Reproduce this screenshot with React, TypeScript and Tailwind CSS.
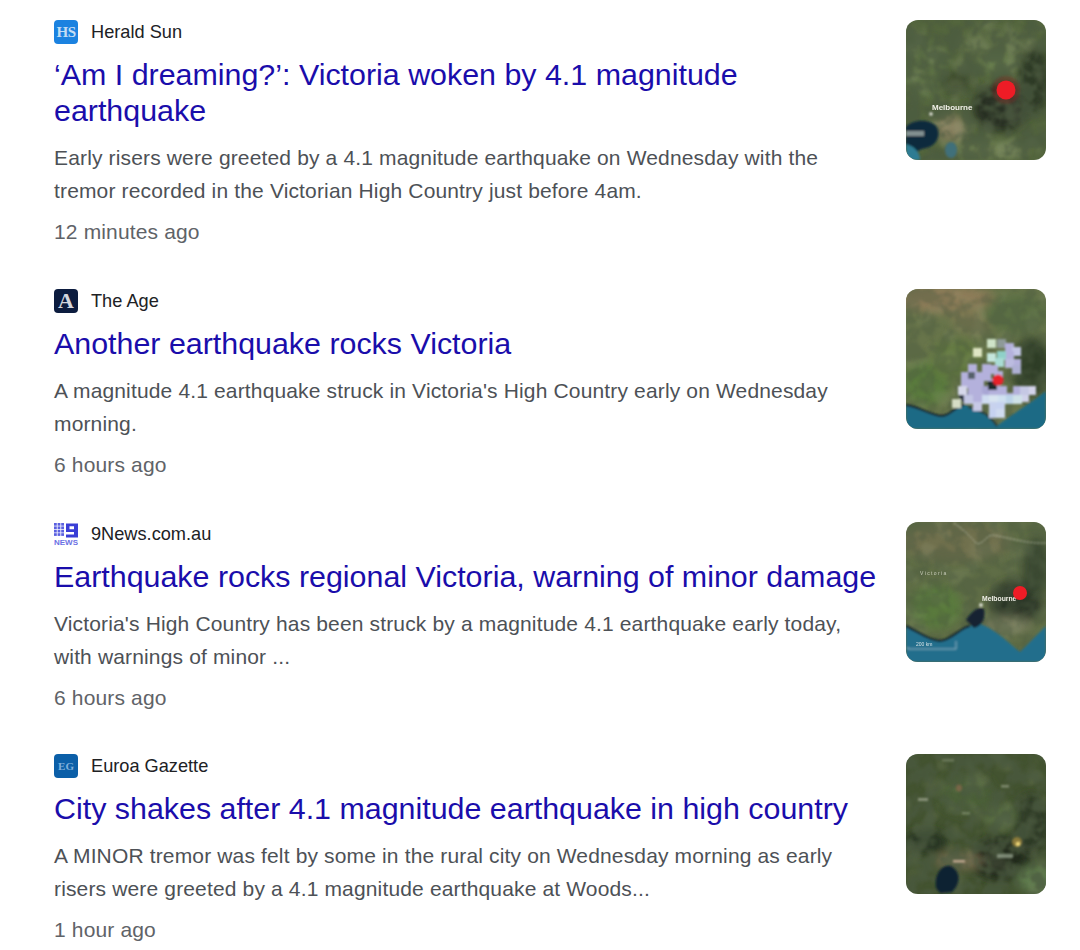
import React from "react";

const FONT = "font-['Liberation_Sans',Arial,sans-serif]";

function Terrain({ id, seed, opacity = 0.7, light = 0.15 }: { id: string; seed: number; opacity?: number; light?: number }) {
  return (
    <>
      <filter id={id} x="0" y="0" width="100%" height="100%">
        <feTurbulence type="fractalNoise" baseFrequency="0.07" numOctaves={3} seed={seed} />
        <feColorMatrix type="matrix" values="0 0 0 0 0.07  0 0 0 0 0.1  0 0 0 0 0.05  4.5 3 0 0 -3.2" />
        <feGaussianBlur stdDeviation="1" />
      </filter>
      <filter id={`${id}l`} x="0" y="0" width="100%" height="100%">
        <feTurbulence type="fractalNoise" baseFrequency="0.05" numOctaves={2} seed={seed + 20} />
        <feColorMatrix type="matrix" values="0 0 0 0 0.5  0 0 0 0 0.55  0 0 0 0 0.34  4.5 3 0 0 -3.7" />
        <feGaussianBlur stdDeviation="1.4" />
      </filter>
      <rect width="140" height="140" filter={`url(#${id}l)`} opacity={light} />
      <rect width="140" height="140" filter={`url(#${id})`} opacity={opacity} />
    </>
  );
}

function MapOne() {
  return (
    <svg viewBox="0 0 140 140" className="w-full h-full block">
      <defs>
        <filter id="b1"><feGaussianBlur stdDeviation="1" /></filter>
        <filter id="b1l"><feGaussianBlur stdDeviation="5" /></filter>
        <filter id="b1t"><feGaussianBlur stdDeviation="0.6" /></filter>
      </defs>
      <rect width="140" height="140" fill="#53653d" />
      <g filter="url(#b1l)">
        <ellipse cx="20" cy="50" rx="26" ry="30" fill="#5c7044" />
        <ellipse cx="90" cy="25" rx="40" ry="18" fill="#5f7047" />
        <ellipse cx="95" cy="88" rx="28" ry="24" fill="#252f20" />
        <ellipse cx="128" cy="60" rx="16" ry="34" fill="#2f3a26" />
        <ellipse cx="50" cy="62" rx="16" ry="12" fill="#3a4a2b" />
        <ellipse cx="90" cy="44" rx="16" ry="10" fill="#6a8050" />
        <ellipse cx="80" cy="130" rx="40" ry="10" fill="#6a7b50" />
        <ellipse cx="44" cy="108" rx="16" ry="14" fill="#87805e" />
      </g>
      <Terrain id="t1" seed={3} />
      <g filter="url(#b1)">
        <path d="M0 107 C6 100 22 98 30 106 C36 116 30 126 20 128 C14 129 10 132 6 135 L0 136 Z" fill="#0f2c3c" />
        <path d="M0 124 C8 126 14 132 14 140 L0 140 Z" fill="#2f7c93" />
        <ellipse cx="45" cy="130" rx="6" ry="8" fill="#41707a" />
        <rect x="0" y="111" width="18" height="5" fill="#a9b2ae" opacity=".75" />
        <circle cx="25" cy="94" r="1.7" fill="#f1f1e8" />
      </g>
      <text x="26" y="90" fontSize="8" fontWeight="700" fill="#f1f0e8" filter="url(#b1t)" className="font-['Liberation_Sans']">Melbourne</text>
      <circle cx="100" cy="70" r="14" fill="#7d1e1e" opacity=".35" filter="url(#b1)" />
      <circle cx="100" cy="70" r="9.5" fill="#ee1c25" filter="url(#b1t)" />
    </svg>
  );
}

const PIXELS: [number, number, string?][] = [
  [85,54,"#cfe3c8"],[71,63,"#dfe6c4"],[95,54,"#8e9a98"],[103,58],[110,62,"#c3c6e6"],[103,66],[95,66,"#8fd0c8"],[85,68,"#c5e6dc"],[93,73,"#a9dcd4"],[110,74],[103,74,"#bcbce0"],[110,80,"#aeb0d4"],
  [66,79],[59,87],[66,87,"#54606a"],[73,87],[80,79],[87,80],[92,86],[80,87],[87,94],[73,94],[66,94],[59,94],[56,101,"#d6d8ea"],[66,101],[73,101],[80,101,"#a8a6d4"],[73,108],[66,108],[87,101],[96,101],[104,108],[111,101],
  [118,108,"#d0d2ea"],[125,101,"#d4d4ea"],[118,101,"#c5c8e4"],[80,110,"#cfdcf0"],[87,110,"#d8e4f0"],[96,110,"#cfe0f0"],[104,110,"#bcd4e8"],[111,110,"#cfe2e8"],[87,117,"#c8d2ee"],[94,117,"#c6d2f0"],[87,124,"#c6d2f0"],[94,124,"#d0dcf0"],[71,117,"#c7c9e6"],[62,110,"#c3c6e4"],[50,114,"#d5dcc5"],
];

function MapTwo() {
  return (
    <svg viewBox="0 0 140 140" className="w-full h-full block">
      <defs>
        <filter id="b2"><feGaussianBlur stdDeviation="1.1" /></filter>
        <filter id="b2l"><feGaussianBlur stdDeviation="5" /></filter>
      </defs>
      <rect width="140" height="140" fill="#67744a" />
      <g filter="url(#b2l)">
        <ellipse cx="40" cy="10" rx="50" ry="14" fill="#8d7c58" />
        <ellipse cx="70" cy="30" rx="24" ry="14" fill="#7f7a52" />
        <ellipse cx="20" cy="95" rx="24" ry="22" fill="#5a7a3c" />
        <ellipse cx="125" cy="78" rx="20" ry="30" fill="#2e3c28" />
        <ellipse cx="110" cy="25" rx="34" ry="20" fill="#5c7044" />
        <ellipse cx="50" cy="70" rx="26" ry="20" fill="#62783f" />
      </g>
      <Terrain id="t2" seed={8} opacity={0.4} light={0.1} />
      <g filter="url(#b2)">
        <path d="M0 116 C14 118 26 127 36 127 C46 126 50 116 58 116 C72 118 84 126 91 137 C102 128 122 116 140 102 L140 140 L0 140 Z" fill="#1f6a85" />
        <path d="M0 116 C14 118 26 127 36 127 C46 126 50 116 58 116" fill="none" stroke="#12202a" strokeWidth="2" />
        <path d="M62 118 C72 120 84 126 91 137" fill="none" stroke="#2a3a34" strokeWidth="2" />
        <ellipse cx="60" cy="108" rx="7" ry="6" fill="#1a2b3a" />
        {PIXELS.map(([x, y, c], i) => (
          <rect key={i} x={x - 4} y={y - 4} width="9" height="9" fill={c ?? "#b4b1dc"} />
        ))}
        <rect x="82" y="92" width="9" height="9" fill="#1f2b2b" />
        <circle cx="92" cy="91" r="5.5" fill="#e8202a" />
      </g>
    </svg>
  );
}

function MapThree() {
  return (
    <svg viewBox="0 0 140 140" className="w-full h-full block">
      <defs>
        <filter id="b3"><feGaussianBlur stdDeviation="0.8" /></filter>
        <filter id="b3l"><feGaussianBlur stdDeviation="5" /></filter>
        <filter id="b3t"><feGaussianBlur stdDeviation="0.55" /></filter>
      </defs>
      <rect width="140" height="140" fill="#5f6d46" />
      <g filter="url(#b3l)">
        <ellipse cx="50" cy="20" rx="55" ry="20" fill="#6f704e" />
        <ellipse cx="30" cy="85" rx="26" ry="22" fill="#5a7a3e" />
        <ellipse cx="110" cy="80" rx="26" ry="22" fill="#2c3626" />
        <ellipse cx="130" cy="45" rx="14" ry="30" fill="#3a4a30" />
        <ellipse cx="100" cy="103" rx="26" ry="9" fill="#767a5c" />
      </g>
      <Terrain id="t3" seed={5} opacity={0.4} light={0.1} />
      <g filter="url(#b3)">
        <path d="M0 104 C12 110 24 119 34 119 C46 118 54 106 64 104 L74 102 C88 106 104 122 114 130 C122 122 132 112 140 104 L140 140 L0 140 Z" fill="#246e8c" />
        <path d="M60 98 C66 88 74 84 78 87 C80 96 76 104 68 106 Z" fill="#122433" />
        <path d="M0 104 C12 110 24 119 34 119 C46 118 54 106 64 104" fill="none" stroke="#12202a" strokeWidth="2" />
        <path d="M48 1 C58 8 64 14 70 21 C76 24 80 14 86 13 C104 16 122 22 140 21" fill="none" stroke="#c9cdb8" strokeWidth="1" strokeDasharray="2 1.5" />
        <circle cx="75" cy="83" r="1.8" fill="#f6f6ee" />
        <path d="M2 125 L2 127 L50 127 L50 119" fill="none" stroke="#b8d0d8" strokeWidth=".9" opacity=".8" />
      </g>
      <text x="14" y="53" fontSize="5" letterSpacing="1.4" fill="#c8cbb8" filter="url(#b3t)" className="font-['Liberation_Sans']">Victoria</text>
      <text x="76" y="79" fontSize="6.8" fontWeight="700" fill="#efefe6" filter="url(#b3t)" className="font-['Liberation_Sans']">Melbourne</text>
      <text x="10" y="124" fontSize="5" fill="#d6e2e6" filter="url(#b3t)" className="font-['Liberation_Sans']">200 km</text>
      <circle cx="114" cy="71" r="7" fill="#ee1c25" filter="url(#b3t)" />
    </svg>
  );
}

function MapFour() {
  return (
    <svg viewBox="0 0 140 140" className="w-full h-full block">
      <defs>
        <filter id="b4"><feGaussianBlur stdDeviation="1.2" /></filter>
        <filter id="b4l"><feGaussianBlur stdDeviation="5" /></filter>
      </defs>
      <rect width="140" height="140" fill="#435330" />
      <g filter="url(#b4l)">
        <ellipse cx="20" cy="88" rx="22" ry="12" fill="#283420" />
        <ellipse cx="95" cy="105" rx="30" ry="22" fill="#232c1e" />
        <ellipse cx="125" cy="70" rx="18" ry="30" fill="#2e3a25" />
        <ellipse cx="95" cy="62" rx="16" ry="12" fill="#5a7044" />
        <ellipse cx="60" cy="40" rx="28" ry="20" fill="#4c6038" />
        <ellipse cx="130" cy="125" rx="20" ry="14" fill="#5f7a4d" />
        <ellipse cx="52" cy="107" rx="24" ry="8" fill="#7d6f52" />
      </g>
      <Terrain id="t4" seed={11} />
      <g filter="url(#b4)">
        <path d="M30 134 C28 120 36 110 44 112 C54 116 56 128 46 138 L34 139 Z" fill="#0e2432" />
        <rect x="47" y="106" width="12" height="2.5" fill="#c2a890" />
        <rect x="91" y="100" width="16" height="4" fill="#a9b4a4" opacity=".6" />
        <rect x="12" y="44" width="10" height="3" fill="#c8ccb8" opacity=".5" />
        <rect x="56" y="58" width="8" height="2.5" fill="#aab49a" opacity=".45" />
        <rect x="95" y="31" width="8" height="2.5" fill="#b4bca4" opacity=".55" />
        <rect x="36" y="5" width="12" height="2.5" fill="#9aa488" opacity=".45" />
        <ellipse cx="53" cy="34" rx="3" ry="3.5" fill="#8a6a4c" opacity=".7" />
        <circle cx="111" cy="88" r="5" fill="#a08a40" opacity=".8" />
        <circle cx="112" cy="90" r="2.2" fill="#f0d878" />
      </g>
    </svg>
  );
}

function Herald() {
  return (
    <div className="w-6 h-6 rounded-[4px] bg-[#1b82e0] flex items-center justify-center overflow-hidden">
      <span className="font-['Liberation_Serif',serif] font-bold text-[15px] leading-none tracking-[-0.5px] text-[#c4ddf4]">HS</span>
    </div>
  );
}

function AgeIcon() {
  return (
    <div className="w-6 h-6 rounded-[4px] bg-[#0c1c3f] flex items-center justify-center overflow-hidden">
      <span className="font-['Liberation_Serif',serif] font-bold text-[22px] leading-none text-[#d4d6de]">A</span>
    </div>
  );
}

function NineIcon() {
  const dots = [];
  for (let r = 0; r < 4; r++) for (let c = 0; c < 3; c++) dots.push(<rect key={`${r}${c}`} x={c * 3.6} y={1 + r * 3.4} width="2.8" height="2.7" fill="#5a60e0" />);
  return (
    <svg viewBox="0 0 24 24" className="w-6 h-6 block">
      {dots}
      <path d="M12 1.5 H24 V15.5 H12 V12.4 H20 V10 H12 Z M15.5 4.2 V7.3 H20 V4.2 Z" fill="#3a3ed6" fillRule="evenodd" />
      <text x="0" y="23" fontSize="7.6" fontWeight="700" textLength="24" lengthAdjust="spacingAndGlyphs" fill="#6a70e4" className="font-['Liberation_Sans']">NEWS</text>
    </svg>
  );
}

function EuroaIcon() {
  return (
    <div className="w-6 h-6 rounded-[4px] bg-[#0b5fa8] flex items-center justify-center overflow-hidden">
      <span className="font-['Liberation_Serif',serif] font-bold text-[11px] leading-none text-[#7fb0dc]">EG</span>
    </div>
  );
}

function Item({ icon, source, title, snippet, time, map }: { icon: React.ReactNode; source: string; title: string; snippet: string; time: string; map: React.ReactNode }) {
  return (
    <article className="flex items-start justify-between">
      <div className="w-[828px]">
        <div className="flex items-center gap-[13px] h-6">
          {icon}
          <span className="text-[18.2px] leading-6 text-[#202124]">{source}</span>
        </div>
        <h3 className="mt-3 text-[30.4px] leading-9 font-normal text-[#1a0dab]">{title}</h3>
        <p className="mt-[13px] text-[21px] tracking-[0.15px] leading-[33px] text-[#4d5156]">{snippet}</p>
        <p className="mt-2 text-[21px] tracking-[0.15px] leading-[33px] text-[#5f6368]">{time}</p>
      </div>
      <div className="w-[140px] h-[140px] rounded-xl overflow-hidden shrink-0">{map}</div>
    </article>
  );
}

export default function App() {
  return (
    <main className={`${FONT} bg-white w-[1080px] h-[950px] overflow-hidden pt-5 pl-[54px] pr-[34px] flex flex-col gap-[40.75px]`}>
      <Item
        icon={<Herald />}
        source="Herald Sun"
        title="‘Am I dreaming?’: Victoria woken by 4.1 magnitude earthquake"
        snippet="Early risers were greeted by a 4.1 magnitude earthquake on Wednesday with the tremor recorded in the Victorian High Country just before 4am."
        time="12 minutes ago"
        map={<MapOne />}
      />
      <Item
        icon={<AgeIcon />}
        source="The Age"
        title="Another earthquake rocks Victoria"
        snippet="A magnitude 4.1 earthquake struck in Victoria's High Country early on Wednesday morning."
        time="6 hours ago"
        map={<MapTwo />}
      />
      <Item
        icon={<NineIcon />}
        source="9News.com.au"
        title="Earthquake rocks regional Victoria, warning of minor damage"
        snippet="Victoria's High Country has been struck by a magnitude 4.1 earthquake early today, with warnings of minor ..."
        time="6 hours ago"
        map={<MapThree />}
      />
      <Item
        icon={<EuroaIcon />}
        source="Euroa Gazette"
        title="City shakes after 4.1 magnitude earthquake in high country"
        snippet="A MINOR tremor was felt by some in the rural city on Wednesday morning as early risers were greeted by a 4.1 magnitude earthquake at Woods..."
        time="1 hour ago"
        map={<MapFour />}
      />
    </main>
  );
}
